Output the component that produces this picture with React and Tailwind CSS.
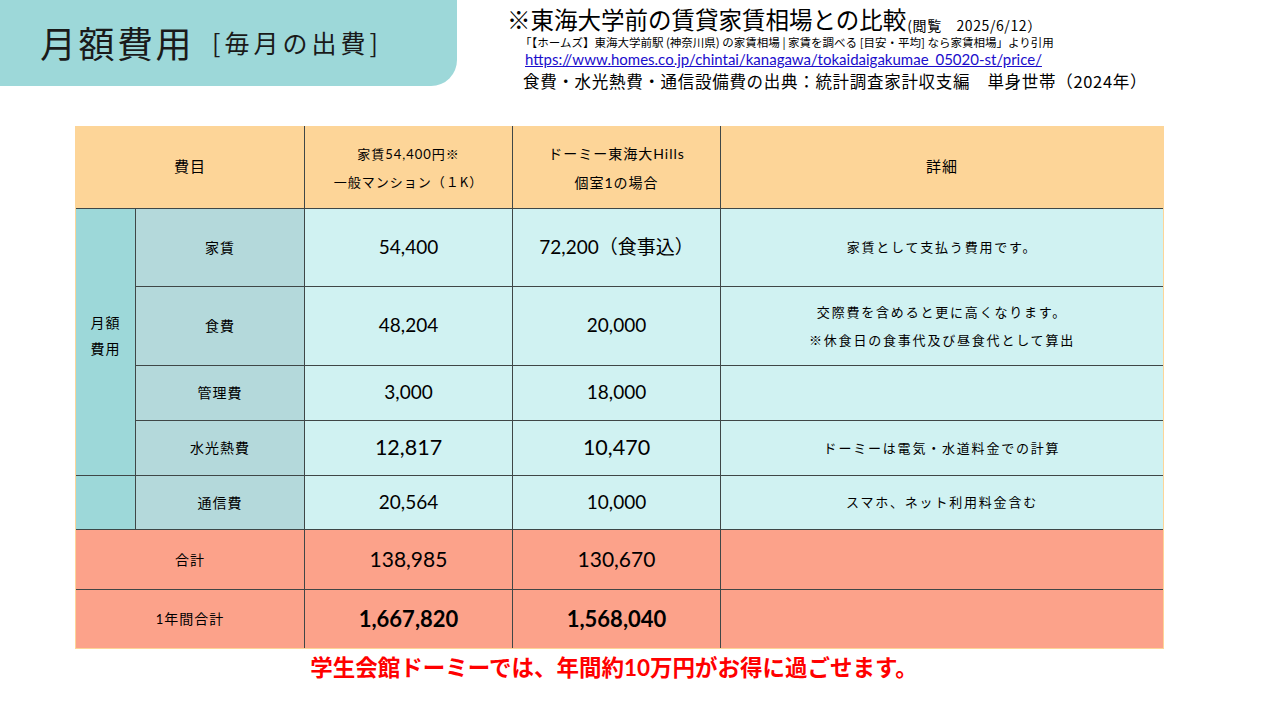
const jp = { fontFamily: '"Noto Sans CJK JP", "Noto Sans", sans-serif' };
const num = { fontFamily: 'Lato, "Noto Sans CJK JP", sans-serif' };

const Cell = ({ className = '', children, style }) => (
    <div className={`flex flex-col items-center justify-center text-center text-black ${className}`} style={style}>
        {children}
    </div>
);

const rows = [
    { label: '家賃', a: '54,400', b: '72,200（食事込）', detail: ['家賃として支払う費用です。'] },
    { label: '食費', a: '48,204', b: '20,000', detail: ['交際費を含めると更に高くなります。', '※休食日の食事代及び昼食代として算出'] },
    { label: '管理費', a: '3,000', b: '18,000', detail: [] },
    { label: '水光熱費', a: '12,817', b: '10,470', detail: ['ドーミーは電気・水道料金での計算'], big: true },
];

export default function App() {
    return (
        <div className="w-[1280px] h-[720px] bg-white relative overflow-hidden" style={jp}>
            <div className="flex items-start">
                <div className="w-[457px] h-[86px] bg-[#9dd8d9] rounded-br-[26px] flex items-center pl-[40px] pb-[2px] shrink-0">
                    <span className="text-[36px] text-[#1a1a1a] tracking-[2.5px] leading-none">月額費用</span>
                    <span className="text-[25px] text-[#1a1a1a] ml-[18px] tracking-[4px] leading-none">[毎月の出費]</span>
                </div>
                <div className="pl-[50px] pt-[8px]">
                    <div className="flex items-end leading-none">
                        <span className="text-[23.5px] text-black">※東海大学前の賃貸家賃相場との比較</span>
                        <span className="text-[14px] text-black ml-[1px] tracking-[0.6px]">(閲覧　2025/6/12）</span>
                    </div>
                    <div className="text-[11.5px] text-black mt-[5px] ml-[13px] leading-none">「【ホームズ】東海大学前駅 (神奈川県) の家賃相場 | 家賃を調べる [目安・平均] なら家賃相場」より引用</div>
                    <div className="text-[15px] text-[#1a0dcc] underline mt-[4px] ml-[18px] leading-none" style={num}>https://www.homes.co.jp/chintai/kanagawa/tokaidaigakumae_05020-st/price/</div>
                    <div className="text-[16.5px] tracking-[0.7px] text-black mt-[6px] ml-[16px] leading-none">食費・水光熱費・通信設備費の出典：統計調査家計収支編　単身世帯（2024年）</div>
                </div>
            </div>

            <div className="ml-[75px] mt-[36px] w-[1089px] border border-[#fdd598] border-t-0">
                <div
                    className="grid gap-px bg-[#3f4747]"
                    style={{
                        gridTemplateColumns: '59px 168px 207px 207px 442px',
                        gridTemplateRows: '82px 77px 78px 54px 54px 53px 59px 58px',
                    }}
                >
                    <Cell className="col-span-2 bg-[#fdd598] text-[15px] tracking-[1px]">費目</Cell>
                    <Cell className="bg-[#fdd598] text-[13px] tracking-[1px] leading-[28px] pt-[2px]">
                        <div>家賃<span style={num}>54,400</span>円※</div>
                        <div>一般マンション（１K）</div>
                    </Cell>
                    <Cell className="bg-[#fdd598] text-[14px] tracking-[1px] leading-[28px] pt-[2px]">
                        <div>ドーミー東海大<span style={num}>Hills</span></div>
                        <div>個室<span style={num}>1</span>の場合</div>
                    </Cell>
                    <Cell className="bg-[#fdd598] text-[15px] tracking-[1px]">詳細</Cell>

                    <Cell className="row-span-4 bg-[#9dd8d9] text-[14px] tracking-[1px] leading-[26px] pb-[14px]">
                        <div>月額</div>
                        <div>費用</div>
                    </Cell>
                    {rows.map((r) => (
                        <RowCells key={r.label} r={r} />
                    ))}

                    <Cell className="bg-[#9dd8d9]" />
                    <Cell className="bg-[#b4d9db] text-[14px] tracking-[1px]">通信費</Cell>
                    <Cell className="bg-[#d0f2f2] text-[19px]" style={num}>20,564</Cell>
                    <Cell className="bg-[#d0f2f2] text-[19px]" style={num}>10,000</Cell>
                    <Cell className="bg-[#d0f2f2] text-[13px] tracking-[1.8px]">スマホ、ネット利用料金含む</Cell>

                    <Cell className="col-span-2 bg-[#fca28a] text-[14px] tracking-[1px]">合計</Cell>
                    <Cell className="bg-[#fca28a] text-[21px]" style={num}>138,985</Cell>
                    <Cell className="bg-[#fca28a] text-[21px]" style={num}>130,670</Cell>
                    <Cell className="bg-[#fca28a]" />

                    <Cell className="col-span-2 bg-[#fca28a] text-[14px] tracking-[1px]">
                        <div><span className="text-[13px]" style={num}>1</span>年間合計</div>
                    </Cell>
                    <Cell className="bg-[#fca28a] text-[22px] font-bold" style={num}>1,667,820</Cell>
                    <Cell className="bg-[#fca28a] text-[22px] font-bold" style={num}>1,568,040</Cell>
                    <Cell className="bg-[#fca28a]" />
                </div>
            </div>

            <div className="w-[1280px] text-center mt-[6px] pr-[52px]">
                <span className="text-[22.5px] font-bold text-[#ff0000] leading-none">学生会館ドーミーでは、年間約<span style={num}>10</span>万円がお得に過ごせます。</span>
            </div>
        </div>
    );
}

function RowCells({ r }) {
    return (
        <>
            <Cell className="bg-[#b4d9db] text-[14px] tracking-[1px]">{r.label}</Cell>
            <Cell className={`bg-[#d0f2f2] ${r.big ? 'text-[21.5px]' : 'text-[19px]'}`} style={num}>{r.a}</Cell>
            <Cell className={`bg-[#d0f2f2] ${r.big ? 'text-[21.5px]' : 'text-[19px]'}`} style={num}>{r.b}</Cell>
            <Cell className="bg-[#d0f2f2] text-[13px] tracking-[1.8px] leading-[28px]">
                {r.detail.map((d) => (
                    <div key={d}>{d}</div>
                ))}
            </Cell>
        </>
    );
}
